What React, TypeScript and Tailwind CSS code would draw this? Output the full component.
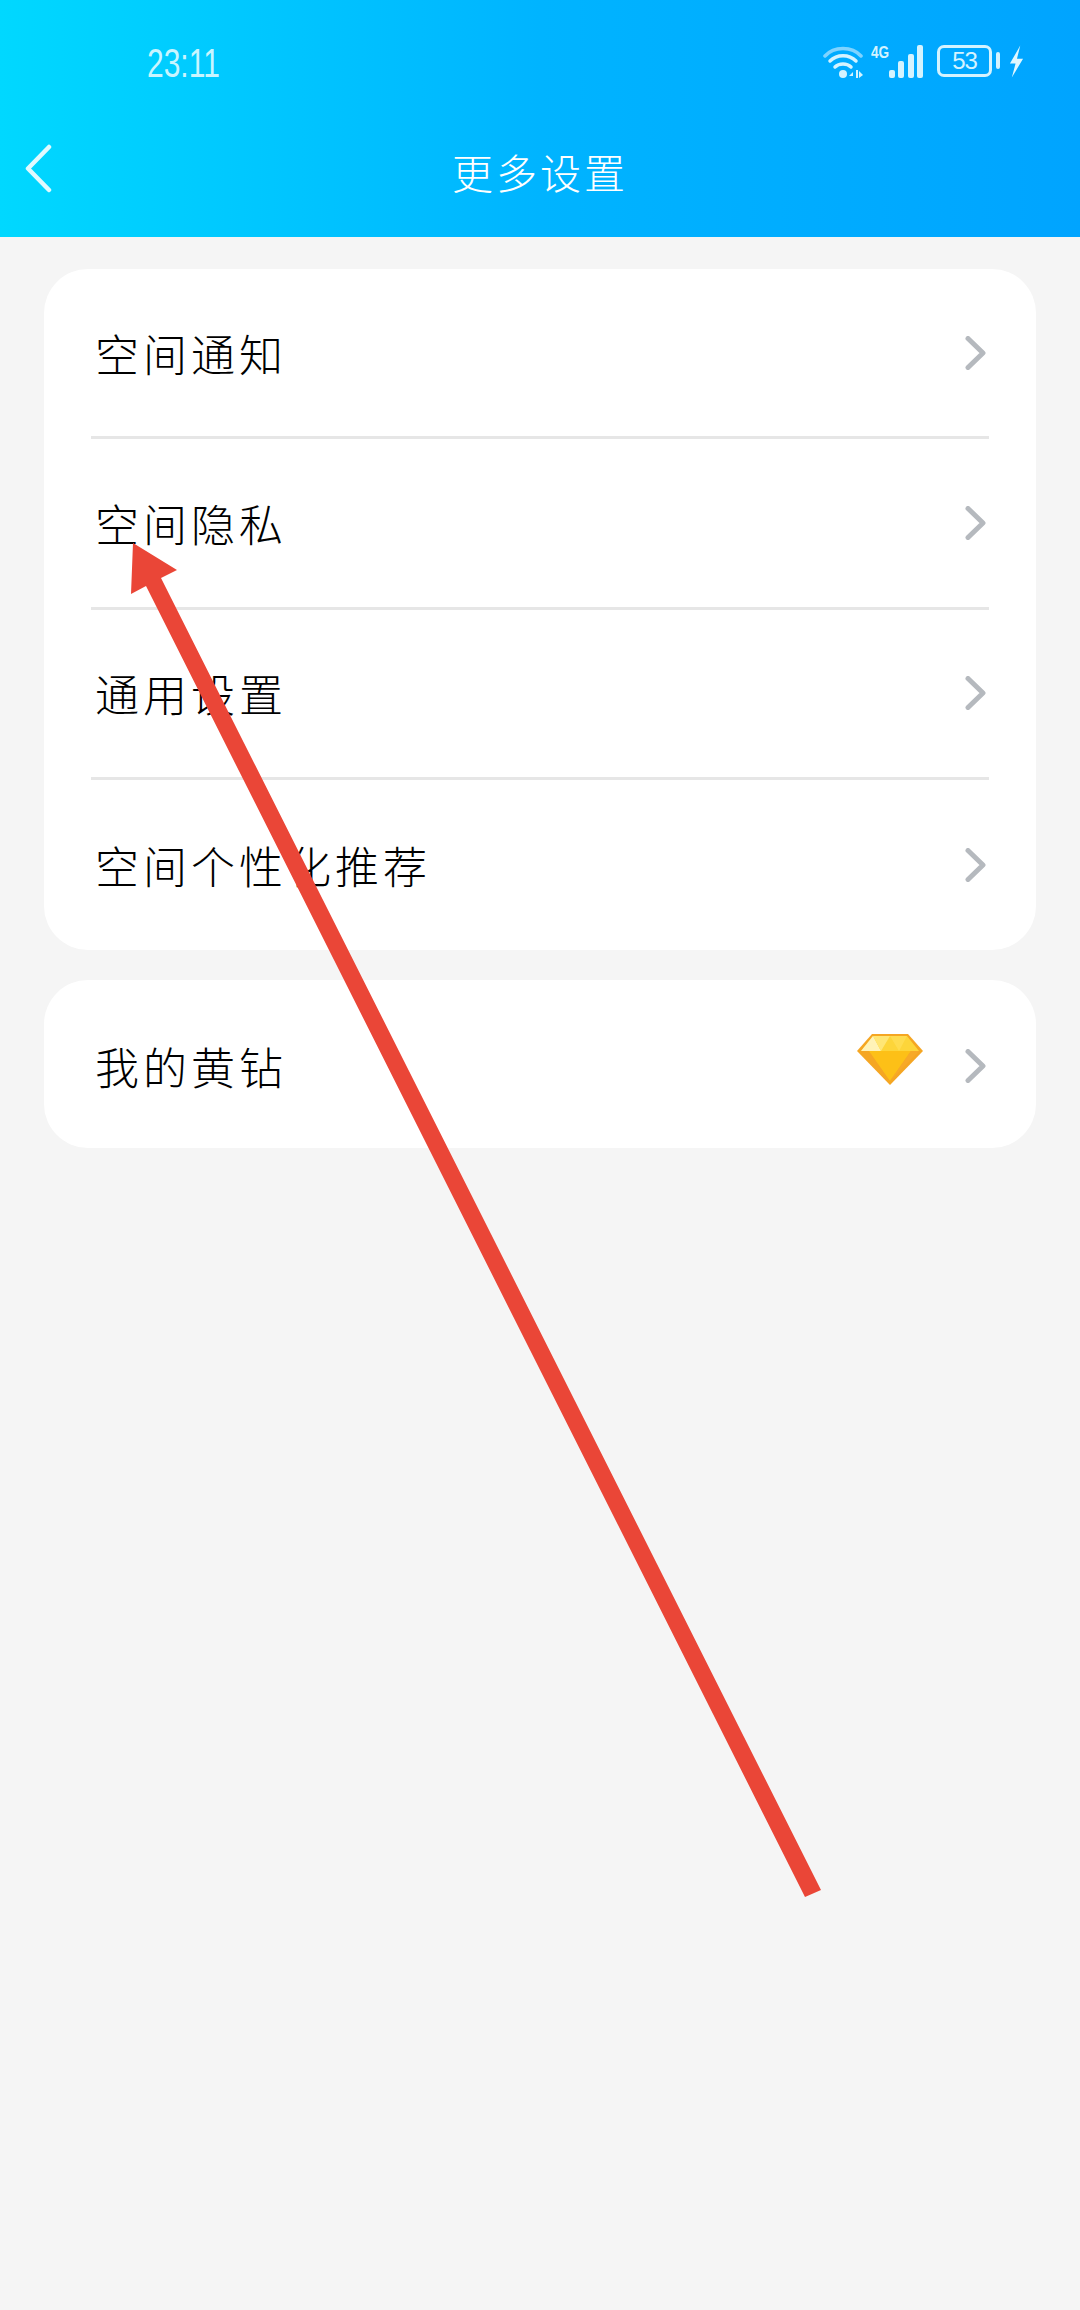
import React from "react";

const cjk = "font-['Noto_Sans_CJK_SC','Noto_Sans',sans-serif]";

function Chevron() {
  return (
    <svg width="21" height="34" viewBox="0 0 21 34" fill="none" className="shrink-0 mr-[3px]">
      <path d="M3 2.5 18 17 3 31.5" stroke="#b5b9be" strokeWidth="5" strokeLinecap="round" strokeLinejoin="round" />
    </svg>
  );
}

function Diamond() {
  return (
    <svg width="68" height="52" viewBox="0 0 68 52" className="shrink-0">
      <path d="M16 1H52L67 18 34 52 1 18Z" fill="#f5a623" />
      <path d="M17 3H51L63 18H5Z" fill="#fdd53a" />
      <path d="M17 3 25 18H5Z" fill="#fff3b8" />
      <path d="M17 3H34L25 18Z" fill="#ffe675" />
      <path d="M34 3H51L43 18Z" fill="#ffdc4f" />
      <path d="M13 18H55L34 48Z" fill="#fdc017" />
      <path d="M55 18H63L34 48Z" fill="#f7a928" />
    </svg>
  );
}

function WifiIcon() {
  return (
    <svg width="42" height="34" viewBox="0 0 42 34" fill="none">
      <path d="M2 11C11 1 29 1 38 11" stroke="#7fd3ff" strokeWidth="3.5" strokeLinecap="round" />
      <path d="M7 16C14 9 26 9 33 16" stroke="#d4f3ff" strokeWidth="3.5" strokeLinecap="round" />
      <path d="M12 22C16 18 24 18 28 22" stroke="#d4f3ff" strokeWidth="3.5" strokeLinecap="round" />
      <circle cx="20" cy="29" r="4" fill="#d4f3ff" />
      <path d="M30 27 26 31H30ZM33 25V33H35V25ZM36 26V33L40 30Z" fill="#d4f3ff" />
    </svg>
  );
}

function SignalBars() {
  return (
    <div className="flex items-end gap-[3.5px] h-[33px] w-[34px]">
      <div className="w-[6px] h-[8px] rounded-[2px] bg-[#d4f3ff]" />
      <div className="w-[6px] h-[17px] rounded-[2px] bg-[#d4f3ff]" />
      <div className="w-[6px] h-[24px] rounded-[2px] bg-[#d4f3ff]" />
      <div className="w-[6px] h-[33px] rounded-[2px] bg-[#d4f3ff]" />
    </div>
  );
}

function StatusBar() {
  return (
    <div className="h-[96px] flex items-start justify-between pt-[45px] pl-[147px] pr-[56px]">
      <span className="text-[#c9f5ff] text-[40px] leading-[36px] font-['Liberation_Sans',sans-serif] font-light scale-x-[0.75] origin-left">
        23:11
      </span>
      <div className="flex items-start">
        <WifiIcon />
        <span className="ml-[6px] w-[18px] text-[#d4f3ff] text-[17px] leading-[16px] font-bold font-['Liberation_Sans',sans-serif] whitespace-nowrap scale-x-[0.8] origin-left">
          4G
        </span>
        <SignalBars />
        <div className="ml-[14px] w-[55px] h-[32px] rounded-[7px] border-[3px] border-[#d4f3ff] flex items-center justify-center text-[#d4f3ff] text-[24px] leading-none tracking-[-1px] font-['Liberation_Sans',sans-serif]">
          53
        </div>
        <div className="ml-[4px] mt-[7px] w-[4px] h-[17px] rounded-full bg-[#d4f3ff]" />
        <svg width="15" height="33" viewBox="0 0 16 34" className="ml-[9px]">
          <path d="M12 0 1 19H7L3 34 15 14H8.5Z" fill="#e0f7ff" />
        </svg>
      </div>
    </div>
  );
}

function Row({ label, extra, divider, height }: { label: string; extra?: React.ReactNode; divider?: boolean; height: string }) {
  return (
    <div className="pl-[47px] pr-[47px]">
      <div className={`${height} flex items-center ${divider ? "border-b-[3px] border-[#e6e6e6]" : ""}`}>
        <span className={`ml-[4px] text-[44px] leading-none tracking-[4px] text-black font-light ${cjk}`}>{label}</span>
        <div className="ml-auto flex items-center">
          {extra}
          <Chevron />
        </div>
      </div>
    </div>
  );
}

export default function App() {
  return (
    <div className="relative w-[1080px] h-[2310px] bg-[#f5f5f5] overflow-hidden">
      <header className="h-[237px] bg-gradient-to-r from-[#00d8ff] via-[#00b4ff] to-[#00a4ff]">
        <StatusBar />
        <div className="relative flex justify-center pt-[47px]">
          <svg className="absolute left-[24px] top-[48px]" width="30" height="50" viewBox="0 0 30 50" fill="none">
            <path d="M25 3 4 24.500 25 46" stroke="#e0faff" strokeWidth="4.500" strokeLinecap="round" strokeLinejoin="round" />
          </svg>
          <span className={`text-white text-[41px] leading-[56px] tracking-[3px] font-light ${cjk}`}>更多设置</span>
        </div>
      </header>

      <div className="mx-[44px] mt-[32px] rounded-[44px] bg-white">
        <Row height="h-[170.25px]" label="空间通知" divider />
        <Row height="h-[170.25px]" label="空间隐私" divider />
        <Row height="h-[170.25px]" label="通用设置" divider />
        <Row height="h-[170.25px]" label="空间个性化推荐" />
      </div>

      <div className="mx-[44px] mt-[30px] rounded-[44px] bg-white">
        <Row
          height="h-[168px] pt-[4px]"
          label="我的黄钻"
          extra={<div className="mr-[41px] -mt-[14px]"><Diamond /></div>}
        />
      </div>

      {/* annotation arrow drawn over the page */}
      <svg className="absolute left-0 top-0 pointer-events-none" width="1080" height="2310" viewBox="0 0 1080 2310">
        <path d="M133 543 177 570 161 578 821 1890 805 1897 146 586 131 594Z" fill="#ea4637" />
      </svg>
    </div>
  );
}
